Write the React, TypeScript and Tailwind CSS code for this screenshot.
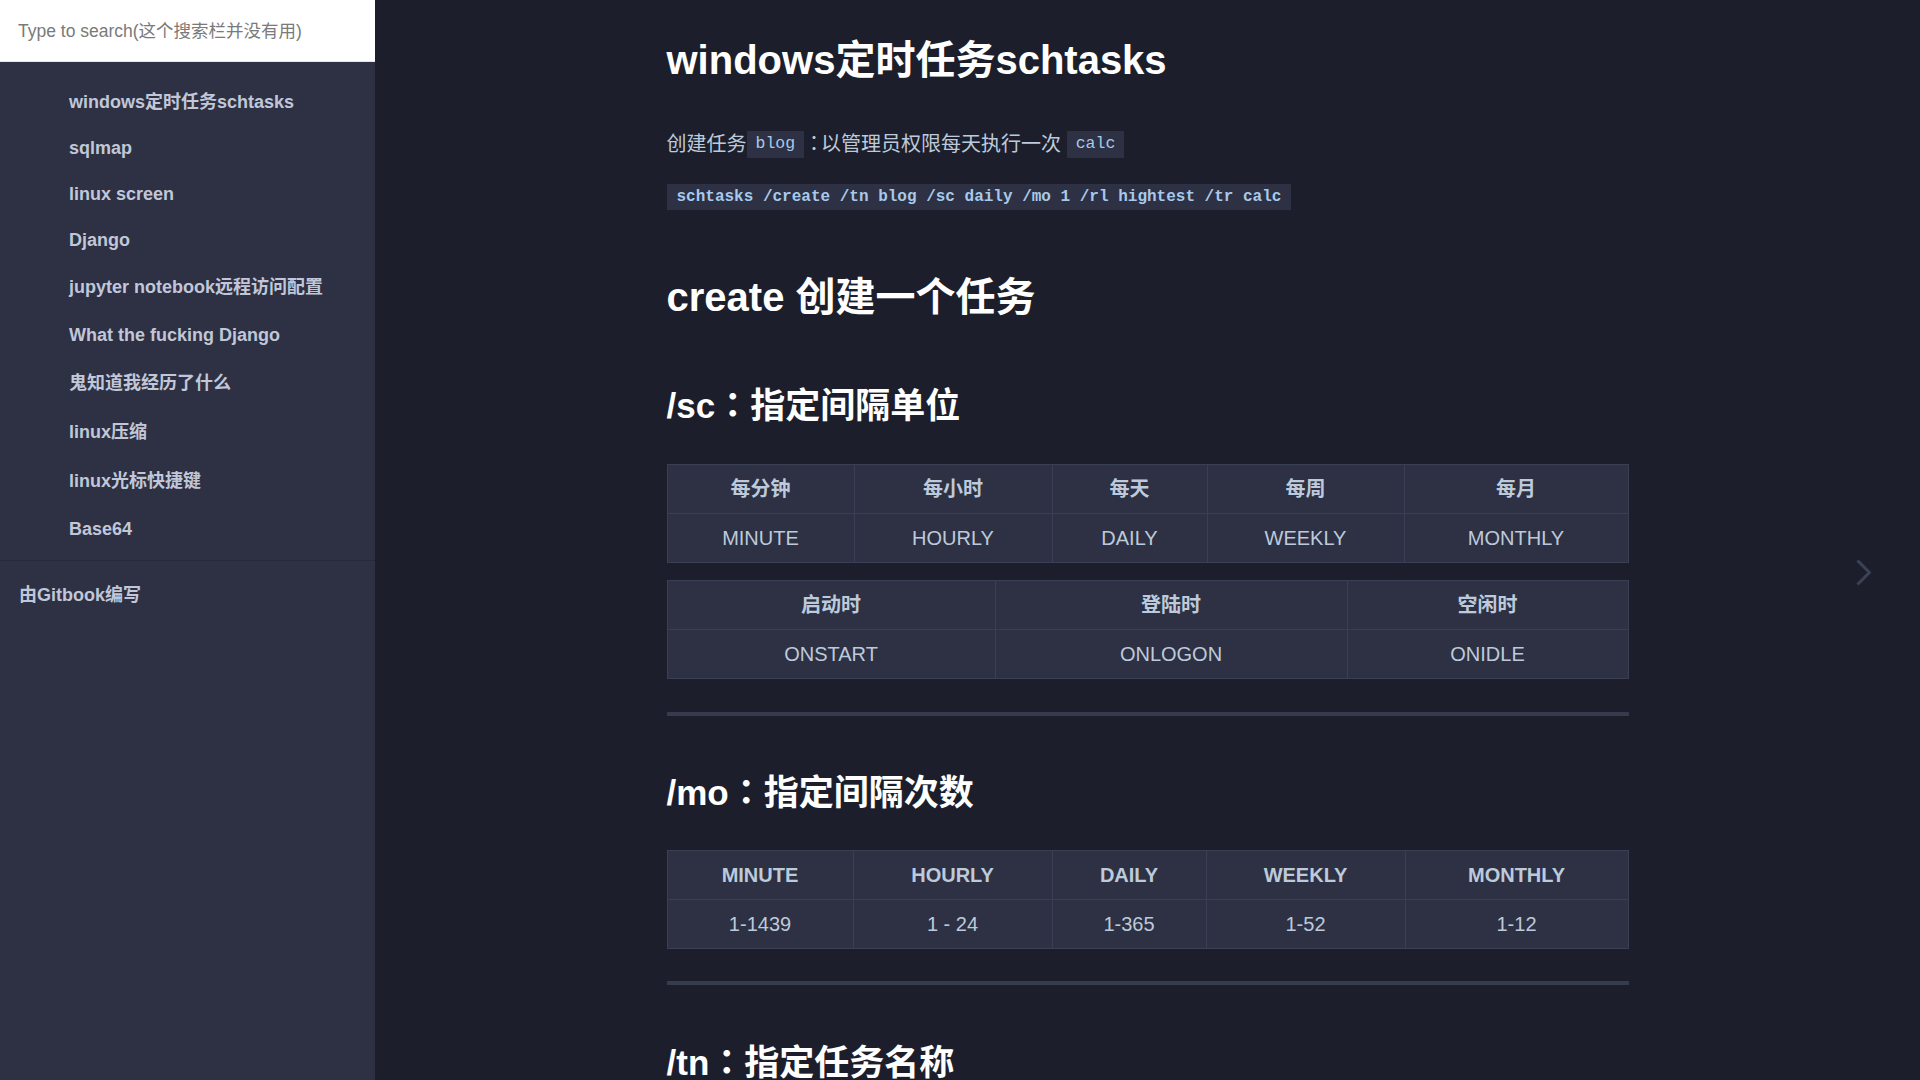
import React from "react";

const navItems: { title: string; h: string }[] = [
  { title: "windows定时任务schtasks", h: "h-[46px]" },
  { title: "sqlmap", h: "h-[46px]" },
  { title: "linux screen", h: "h-[46px]" },
  { title: "Django", h: "h-[46px]" },
  { title: "jupyter notebook远程访问配置", h: "h-[49px]" },
  { title: "What the fucking Django", h: "h-[47px]" },
  { title: "鬼知道我经历了什么", h: "h-[49px]" },
  { title: "linux压缩", h: "h-[49px]" },
  { title: "linux光标快捷键", h: "h-[49px]" },
  { title: "Base64", h: "h-[46px]" },
];

const scUnits = {
  cols: ["w-[187px]", "w-[198px]", "w-[155px]", "w-[197px]", "w-[224px]"],
  head: ["每分钟", "每小时", "每天", "每周", "每月"],
  body: ["MINUTE", "HOURLY", "DAILY", "WEEKLY", "MONTHLY"],
};

const scEvents = {
  cols: ["w-[328px]", "w-[352px]", "w-[281px]"],
  head: ["启动时", "登陆时", "空闲时"],
  body: ["ONSTART", "ONLOGON", "ONIDLE"],
};

const moRanges = {
  cols: ["w-[186px]", "w-[199px]", "w-[154px]", "w-[199px]", "w-[223px]"],
  head: ["MINUTE", "HOURLY", "DAILY", "WEEKLY", "MONTHLY"],
  body: ["1-1439", "1 - 24", "1-365", "1-52", "1-12"],
};

function Sidebar() {
  return (
    <aside className="flex w-[375px] shrink-0 flex-col bg-[#2d3143]">
      <div className="flex h-[62px] items-center border-b border-black/10 bg-white px-[18px] pt-[2px]">
        <input
          placeholder="Type to search(这个搜索栏并没有用)"
          className="w-full bg-transparent text-[17.5px] text-[#333] outline-none placeholder:text-[#7a7a7a]"
        />
      </div>
      <ul className="pt-[17px]">
        {navItems.map((item) => (
          <li
            key={item.title}
            className={`${item.h} flex items-center pl-[69px] text-[18px] font-bold text-[#c1c7d8]`}
          >
            {item.title}
          </li>
        ))}
      </ul>
      <div className="mt-[8px] h-px bg-[#262a38]" />
      <div className="mt-[9px] flex h-[50px] items-center pl-[19px] text-[18px] font-bold text-[#c1c7d8]">
        由Gitbook编写
      </div>
    </aside>
  );
}

// centered full-width colon, like the original CJK font draws it
function Colon() {
  return <span className="font-['Noto_Sans_CJK_TC',sans-serif] leading-none">：</span>;
}

function InlineCode({ children }: { children: React.ReactNode }) {
  return (
    <span className="inline-flex h-[27px] items-center bg-[#2d3143] px-[9px] font-['Liberation_Mono',monospace] text-[16.5px] text-[#a9c9ea]">
      {children}
    </span>
  );
}

function DataTable({
  data,
  className,
}: {
  data: { cols: string[]; head: string[]; body: string[] };
  className: string;
}) {
  return (
    <table className={`w-[962px] table-fixed border-collapse text-[20px] text-[#bdcadb] ${className}`}>
      <colgroup>
        {data.cols.map((c, i) => (
          <col key={i} className={c} />
        ))}
      </colgroup>
      <thead>
        <tr>
          {data.head.map((h) => (
            <th key={h} className="h-[49px] border border-[#3b3f54] bg-[#2d3143] px-[16px] text-center font-bold">
              {h}
            </th>
          ))}
        </tr>
      </thead>
      <tbody>
        <tr>
          {data.body.map((b) => (
            <td key={b} className="h-[49px] border border-[#3b3f54] bg-[#2d3143] px-[16px] text-center">
              {b}
            </td>
          ))}
        </tr>
      </tbody>
    </table>
  );
}

export default function App() {
  return (
    <div className="flex h-screen w-full overflow-hidden bg-[#1c1f2b] font-['Liberation_Sans','Noto_Sans_CJK_SC',sans-serif]">
      <Sidebar />
      <main className="relative flex-1 overflow-hidden">
        <div className="mx-auto w-[1000px] px-[19px] pt-[35px]">
          <h1 className="text-[40px] font-bold leading-[50px] text-white">windows定时任务schtasks</h1>

          <p className="mt-[44px] flex h-[30px] items-center whitespace-pre text-[20px] text-[#bdcadb]">
            <span>创建任务</span>
            <InlineCode>blog</InlineCode>
            <span className="-mr-[3px]">
              <Colon />
            </span>
            <span>以管理员权限每天执行一次 </span>
            <InlineCode>calc</InlineCode>
          </p>

          <div className="mt-[25px] flex h-[26px] w-fit items-center bg-[#2d3143] px-[10px] font-['Liberation_Mono',monospace] text-[16px] font-bold text-[#a9c9ea]">
            schtasks /create /tn blog /sc daily /mo 1 /rl hightest /tr calc
          </div>

          <h2 className="mt-[62px] text-[40px] font-bold leading-[50px] text-white">create 创建一个任务</h2>

          <h3 className="mt-[62px] h-[44px] text-[35px] font-bold leading-[44px] text-white">
            /sc<Colon />指定间隔单位
          </h3>

          <DataTable data={scUnits} className="mt-[36px]" />
          <DataTable data={scEvents} className="mt-[17px]" />

          <hr className="mt-[33px] h-[4px] border-0 bg-[#373b4e]" />

          <h3 className="mt-[55px] h-[44px] text-[35px] font-bold leading-[44px] text-white">
            /mo<Colon />指定间隔次数
          </h3>

          <DataTable data={moRanges} className="mt-[35px]" />

          <hr className="mt-[32px] h-[4px] border-0 bg-[#373b4e]" />

          <h3 className="mt-[56px] h-[44px] text-[35px] font-bold leading-[44px] text-white">
            /tn<Colon />指定任务名称
          </h3>
        </div>

        {/* next page arrow */}
        <div className="absolute right-[49px] top-[559px]">
          <svg width="15" height="27" viewBox="0 0 15 27" fill="none">
            <polyline points="1.5,1.5 13.5,13.5 1.5,25.5" stroke="#3b4256" strokeWidth="3" />
          </svg>
        </div>
      </main>
    </div>
  );
}
